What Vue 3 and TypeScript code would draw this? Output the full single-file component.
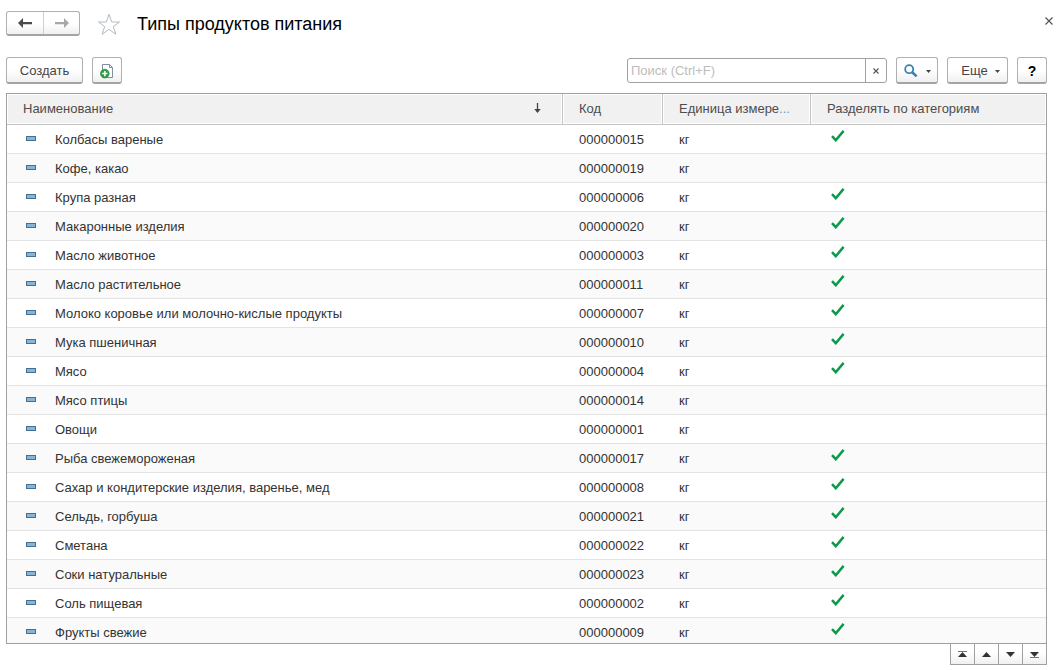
<script setup lang="ts">
import { ref } from 'vue'

interface Row {
  name: string
  code: string
  split: boolean
}

const query = ref('')

const rows: Row[] = [
  { name: 'Колбасы вареные', code: '000000015', split: true },
  { name: 'Кофе, какао', code: '000000019', split: false },
  { name: 'Крупа разная', code: '000000006', split: true },
  { name: 'Макаронные изделия', code: '000000020', split: true },
  { name: 'Масло животное', code: '000000003', split: true },
  { name: 'Масло растительное', code: '000000011', split: true },
  { name: 'Молоко коровье или молочно-кислые продукты', code: '000000007', split: true },
  { name: 'Мука пшеничная', code: '000000010', split: true },
  { name: 'Мясо', code: '000000004', split: true },
  { name: 'Мясо птицы', code: '000000014', split: false },
  { name: 'Овощи', code: '000000001', split: false },
  { name: 'Рыба свежемороженая', code: '000000017', split: true },
  { name: 'Сахар и кондитерские изделия, варенье, мед', code: '000000008', split: true },
  { name: 'Сельдь, горбуша', code: '000000021', split: true },
  { name: 'Сметана', code: '000000022', split: true },
  { name: 'Соки натуральные', code: '000000023', split: true },
  { name: 'Соль пищевая', code: '000000002', split: true },
  { name: 'Фрукты свежие', code: '000000009', split: true },
]
</script>

<template>
  <main class="page">
    <header class="titlebar">
      <div class="nav">
        <button type="button" aria-label="Назад">
          <svg width="14" height="10" viewBox="0 0 14 10"><path d="M0 5 5 0V4H14V6.2H5V10Z" fill="#4a4a4a" /></svg>
        </button>
        <button type="button" aria-label="Вперед">
          <svg width="14" height="10" viewBox="0 0 14 10"><path d="M14 5 9 0V4H0V6.2H9V10Z" fill="#a8a8a8" /></svg>
        </button>
      </div>
      <button type="button" class="bare star" aria-label="В избранное">
        <svg width="24" height="23" viewBox="0 0 24 23">
          <path d="M12 1.3 14.7 9H22.5L16.3 13.6 18.9 21.3 12 16.4 5.1 21.3 7.7 13.6 1.5 9H9.3Z" fill="#fff" stroke="#b4bac2" />
        </svg>
      </button>
      <h1>Типы продуктов питания</h1>
      <button type="button" class="bare close" aria-label="Закрыть">
        <svg width="8" height="8" viewBox="0 0 8 8"><path d="M.5.5 7.5 7.5M7.5.5.5 7.5" stroke="#555" stroke-width="1.2" /></svg>
      </button>
    </header>

    <div class="toolbar">
      <button type="button" class="btn create">Создать</button>
      <button type="button" class="btn square" aria-label="Создать копированием">
        <svg width="14" height="16" viewBox="0 0 14 16">
          <path d="M2.5 1.5H9.5L12.5 4.5V14.5H2.5Z" fill="#fff" stroke="#7d8fa3" />
          <path d="M9.5 1.5V4.5H12.5" fill="none" stroke="#7d8fa3" />
          <circle cx="4.8" cy="10.6" r="4.4" fill="#2f9e44" stroke="#23823a" stroke-width=".6" />
          <path d="M4.8 8V13.2M2.2 10.6H7.4" stroke="#fff" stroke-width="1.5" />
        </svg>
      </button>
      <div class="search">
        <input v-model="query" type="text" placeholder="Поиск (Ctrl+F)" aria-label="Поиск">
        <button type="button" aria-label="Очистить" @click="query = ''">
          <svg width="6" height="6" viewBox="0 0 6 6"><path d="M.5.5 5.5 5.5M5.5.5.5 5.5" stroke="#555" stroke-width="1.1" /></svg>
        </button>
      </div>
      <button type="button" class="btn find" aria-label="Найти">
        <svg width="14" height="14" viewBox="0 0 14 14">
          <circle cx="5.2" cy="5.2" r="4" fill="none" stroke="#3b82b0" stroke-width="1.8" />
          <path d="M8.2 8.2 12.6 12.4" stroke="#3b82b0" stroke-width="2.6" />
        </svg>
        <svg class="caret" width="5" height="3" viewBox="0 0 5 3"><path d="M0 0H5L2.5 3Z" fill="#444" /></svg>
      </button>
      <button type="button" class="btn more">
        Еще
        <svg class="caret" width="5" height="3" viewBox="0 0 5 3"><path d="M0 0H5L2.5 3Z" fill="#444" /></svg>
      </button>
      <button type="button" class="btn square help">?</button>
    </div>

    <div class="list">
      <table>
        <colgroup>
          <col class="c-name">
          <col class="c-code">
          <col class="c-unit">
          <col>
        </colgroup>
        <thead>
          <tr>
            <th scope="col">
              <div class="sorted">
                <span>Наименование</span>
                <svg width="7" height="10" viewBox="0 0 7 10">
                  <path d="M3.5 0V9" stroke="#444" stroke-width="1.3" /><path d="M.3 6H6.7L3.5 10Z" fill="#444" />
                </svg>
              </div>
            </th>
            <th scope="col">Код</th>
            <th scope="col">Единица измере<span class="dots">...</span></th>
            <th scope="col">Разделять по категориям</th>
          </tr>
        </thead>
        <tbody>
          <tr v-for="row in rows" :key="row.code">
            <td>
              <div class="item">
                <svg width="10" height="5" viewBox="0 0 10 5">
                  <rect x=".5" y=".5" width="9" height="4" fill="#86b5d9" stroke="#456f8f" />
                </svg>
                <span>{{ row.name }}</span>
              </div>
            </td>
            <td>{{ row.code }}</td>
            <td>кг</td>
            <td class="flag">
              <svg v-if="row.split" role="img" aria-label="Да" width="14" height="12" viewBox="0 0 14 12">
                <path d="M1 6.2 4.8 10.2 12.6 .9" fill="none" stroke="#0a9a4a" stroke-width="2.5" />
              </svg>
            </td>
          </tr>
        </tbody>
      </table>
    </div>

    <nav class="pager" aria-label="Прокрутка списка">
      <button type="button" aria-label="В начало">
        <svg width="9" height="7" viewBox="0 0 9 7"><path d="M0 .5H9" stroke="#777" /><path d="M0 6H9L4.5 1Z" fill="#333" /></svg>
      </button>
      <button type="button" aria-label="Вверх">
        <svg width="9" height="5" viewBox="0 0 9 5"><path d="M0 5H9L4.5 0Z" fill="#333" /></svg>
      </button>
      <button type="button" aria-label="Вниз">
        <svg width="9" height="5" viewBox="0 0 9 5"><path d="M0 0H9L4.5 5Z" fill="#333" /></svg>
      </button>
      <button type="button" aria-label="В конец">
        <svg width="9" height="7" viewBox="0 0 9 7"><path d="M0 6.5H9" stroke="#777" /><path d="M0 1H9L4.5 6Z" fill="#333" /></svg>
      </button>
    </nav>
  </main>
</template>

<style>
body {
  margin: 0;
  background: #fff;
}
</style>

<style scoped>
.page {
  box-sizing: border-box;
  display: flex;
  flex-direction: column;
  height: 100vh;
  padding: 11px 13px 5px 6px;
  color: #333;
  font: 13px/16px "Liberation Sans", Arial, sans-serif;
}

button,
input {
  box-sizing: border-box;
  margin: 0;
  padding: 0;
  font: inherit;
  color: inherit;
}

button {
  display: flex;
  align-items: center;
  justify-content: center;
}

svg {
  display: block;
  flex: none;
}

.titlebar {
  display: flex;
  align-items: center;
  height: 26px;
  margin-right: -6px;
}

.nav {
  display: flex;
  align-self: flex-start;
  border: 1px solid #b0b0b0;
  border-bottom: 2px solid #a4a4a4;
  border-radius: 3px;
  background: linear-gradient(#fff 50%, #f0f0f0);
}

.nav button {
  width: 36px;
  height: 22px;
  border: 0;
  background: none;
}

.nav button + button {
  border-left: 1px solid #d0d0d0;
}

.bare {
  border: 0;
  background: none;
}

.star {
  margin-left: 17px;
}

h1 {
  flex: 1;
  margin: 0 0 0 16px;
  color: #000;
  font-size: 18px;
  font-weight: 400;
  line-height: 22px;
}

.close {
  align-self: flex-start;
  height: 19px;
}

.toolbar {
  display: flex;
  align-items: center;
  gap: 9px;
  margin: 20px 0 9px;
}

.btn {
  height: 27px;
  padding-top: 1px;
  border: 1px solid #b0b0b0;
  border-bottom: 2px solid #a4a4a4;
  border-radius: 3px;
  background: linear-gradient(#fff 50%, #f0f0f0);
  color: #444;
}

.create {
  width: 77px;
}

.square {
  width: 30px;
}

.find {
  width: 42px;
  gap: 8px;
}

.more {
  width: 61px;
  padding-left: 6px;
  gap: 7px;
}

.caret {
  margin-top: 2px;
}

.help {
  color: #000;
  font-size: 14px;
  font-weight: 700;
}

.search {
  box-sizing: border-box;
  display: flex;
  width: 260px;
  height: 25px;
  margin-left: auto;
  border: 1px solid #a0a0a0;
  border-radius: 3px;
  background: #fff;
}

.search input {
  flex: 1;
  min-width: 0;
  padding-left: 3px;
  border: 0;
  outline: 0;
  background: none;
}

.search input::placeholder {
  color: #bdbdbd;
}

.search button {
  width: 21px;
  border: 0;
  border-left: 1px solid #a0a0a0;
  background: none;
}

.list {
  flex: 1;
  min-height: 0;
  overflow: hidden;
  border: 1px solid #a0a0a0;
}

table {
  width: 100%;
  table-layout: fixed;
  border-collapse: separate;
  border-spacing: 0;
}

.c-name {
  width: 556px;
}

.c-code {
  width: 100px;
}

.c-unit {
  width: 148px;
}

th,
td {
  box-sizing: border-box;
  padding: 0 16px;
  text-align: left;
  font-weight: 400;
  white-space: nowrap;
}

th {
  height: 31px;
  border-right: 1px solid #c4c4c4;
  border-bottom: 1px solid #c4c4c4;
  background: #f1f1f1;
  box-shadow: inset 0 0 0 1px #fff;
  color: #4d4d4d;
}

th:last-child {
  border-right: 0;
}

td {
  height: 29px;
  padding-top: 2px;
  border-bottom: 1px solid #e3e3e3;
}

tbody tr:nth-child(even) {
  background: #fafafa;
}

.sorted {
  display: flex;
  align-items: center;
  justify-content: space-between;
  padding-right: 5px;
}

.sorted svg {
  margin-bottom: 2px;
}

.dots {
  color: #5b9bd0;
}

.item {
  display: flex;
  align-items: center;
  gap: 19px;
  padding-left: 3px;
}

.item svg {
  margin-bottom: 4px;
}

.flag {
  padding-left: 20px;
}

.flag svg {
  margin-bottom: 8px;
}

.pager {
  display: flex;
  align-self: flex-end;
  margin-top: -1px;
  border: 1px solid #a0a0a0;
}

.pager button {
  width: 24px;
  height: 20px;
  border: 0;
  border-left: 1px solid #a0a0a0;
  background: linear-gradient(#fff 40%, #f0f0f0);
}

.pager button:first-child {
  width: 23px;
  border-left: 0;
}
</style>
